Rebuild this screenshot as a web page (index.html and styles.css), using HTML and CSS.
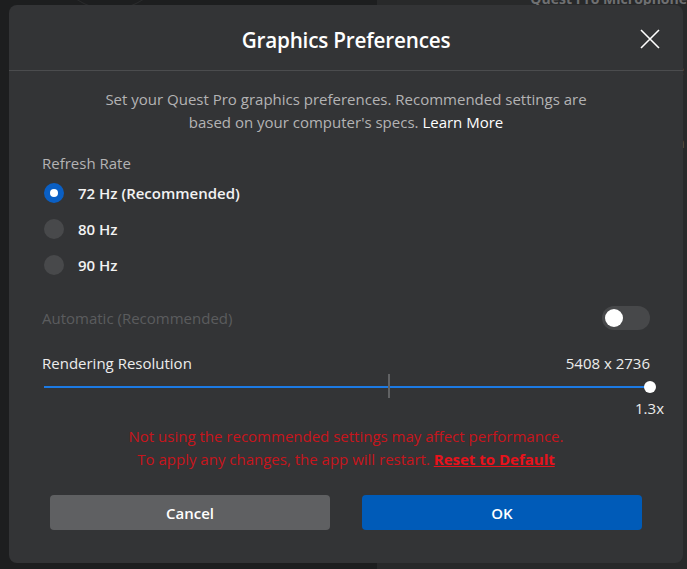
FILE: index.html
```html
<!DOCTYPE html>
<html>
<head>
<meta charset="utf-8">
<link rel="stylesheet" href="styles.css">
</head>
<body>
<div class="page">
  <div class="left-area"><div class="avatar"></div></div>
  <div class="right-area">
    <div class="bg-title">Quest Pro Microphone</div>
    <div class="bg-line">e</div>
    <div class="bg-line">n</div>
    <div class="bg-line">c</div>
  </div>
</div>

<div class="modal">
  <div class="modal-header">
    <h1 class="modal-title">Graphics Preferences</h1>
    <button class="close-btn" aria-label="Close">
      <svg width="20" height="20" viewBox="0 0 20 20"><path d="M1 1 L19 19 M19 1 L1 19" stroke="#fff" stroke-width="1.6" fill="none"/></svg>
    </button>
  </div>
  <div class="modal-body">
    <p class="desc">Set your Quest Pro graphics preferences. Recommended settings are<br>based on your computer's specs. <span class="learn">Learn More</span></p>

    <div class="section-label">Refresh Rate</div>
    <div class="radio-group">
      <div class="radio-row"><span class="radio checked"></span><span class="radio-label">72 Hz (Recommended)</span></div>
      <div class="radio-row"><span class="radio"></span><span class="radio-label">80 Hz</span></div>
      <div class="radio-row"><span class="radio"></span><span class="radio-label">90 Hz</span></div>
    </div>

    <div class="auto-row">
      <span class="auto-label">Automatic (Recommended)</span>
      <span class="toggle"><span class="knob"></span></span>
    </div>

    <div class="res-row">
      <span class="res-label">Rendering Resolution</span>
      <span class="res-value">5408 x 2736</span>
    </div>
    <div class="slider">
      <div class="track"></div>
      <div class="tick"></div>
      <div class="thumb"></div>
    </div>
    <div class="scale-row"><span class="scale">1.3x</span></div>

    <p class="warning">Not using the recommended settings may affect performance.<br>To apply any changes, the app will restart. <a class="reset">Reset to Default</a></p>

    <div class="buttons">
      <button class="btn cancel">Cancel</button>
      <button class="btn ok">OK</button>
    </div>
  </div>
</div>
</body>
</html>
```

FILE: styles.css
```css
* { box-sizing: border-box; }
html, body { margin: 0; padding: 0; }
body {
  width: 687px;
  height: 569px;
  overflow: hidden;
  background: #1d1e1f;
  font-family: "Open Sans", "Noto Sans", sans-serif;
  position: relative;
}
.page {
  display: flex;
  height: 569px;
}
.left-area {
  width: 385px;
  background: #1d1e1f;
  position: relative;
}
.avatar {
  position: absolute;
  left: 60px;
  top: -70px;
  width: 100px;
  height: 80px;
  border-radius: 50%;
  border: 1px solid #2a2b2c;
}
.right-area {
  flex: 1;
  background: #28292a;
  padding-left: 153px;
  display: flex;
  flex-direction: column;
  gap: 54px;
}
.bg-title {
  color: #6f7072;
  font-weight: 700;
  font-size: 14px;
  line-height: 14px;
  margin-top: -8px;
  white-space: nowrap;
}
.bg-line { color: #555; font-size: 14px; padding-left: 146px; }

.modal {
  position: absolute;
  left: 9px;
  top: 5px;
  width: 674px;
  height: 558px;
  background: #333436;
  border-radius: 8px;
  display: flex;
  flex-direction: column;
  color: #fff;
}
.modal-header {
  height: 66px;
  border-bottom: 1px solid #4b4c4e;
  display: flex;
  align-items: center;
  justify-content: center;
  position: relative;
}
.modal-title {
  margin: 0;
  font-size: 20.7px;
  font-weight: 600;
  letter-spacing: -0.2px;
  padding-top: 4px;
}
.close-btn {
  position: absolute;
  right: 23px;
  top: 24px;
  background: none;
  border: 0;
  padding: 0;
  width: 20px;
  height: 20px;
  cursor: pointer;
}
.close-btn svg { display: block; }

.modal-body {
  padding: 17px 33px 0 33px;
  display: flex;
  flex-direction: column;
}
.desc {
  margin: 0;
  text-align: center;
  color: #b3b3b4;
  font-size: 15px;
  line-height: 23px;
}
.learn { color: #fff; font-weight: 500; }

.section-label {
  margin-top: 19px;
  font-size: 15px;
  color: #b3b3b4;
  line-height: 20px;
}
.radio-group {
  display: flex;
  flex-direction: column;
  gap: 16px;
  margin-top: 10px;
}
.radio-row {
  display: flex;
  align-items: center;
  gap: 14px;
  height: 20px;
  padding-left: 2px;
}
.radio {
  width: 20px;
  height: 20px;
  border-radius: 50%;
  background: #48494b;
  display: flex;
  align-items: center;
  justify-content: center;
}
.radio.checked { background: #0a5fc4; }
.radio.checked::after {
  content: "";
  width: 8px;
  height: 8px;
  border-radius: 50%;
  background: #fff;
}
.radio-label {
  font-weight: 600;
  font-size: 15px;
  color: #f2f2f2;
}
.auto-row {
  margin-top: 31px;
  display: flex;
  justify-content: space-between;
  align-items: center;
  height: 24px;
}
.auto-label { color: #5b5c5e; font-size: 15px; }
.toggle {
  width: 48px;
  height: 24px;
  border-radius: 12px;
  background: #47484a;
  display: flex;
  align-items: center;
  padding-left: 3px;
}
.knob {
  width: 18px;
  height: 18px;
  border-radius: 50%;
  background: #fff;
}
.res-row {
  margin-top: 23px;
  display: flex;
  justify-content: space-between;
  align-items: center;
  height: 20px;
  font-size: 15px;
  color: #ececec;
}
.slider {
  position: relative;
  height: 24px;
  margin-top: 1px;
  margin-left: 2px;
}
.track {
  position: absolute;
  left: 0;
  right: 0;
  top: 12px;
  height: 2px;
  background: #1c7ae4;
}
.tick {
  position: absolute;
  left: 344px;
  top: 0;
  width: 2px;
  height: 24px;
  background: #616264;
}
.thumb {
  position: absolute;
  right: -6px;
  top: 7px;
  width: 12px;
  height: 12px;
  border-radius: 50%;
  background: #fff;
}
.scale-row {
  display: flex;
  justify-content: flex-end;
  margin-right: -14px;
  margin-top: 1px;
  font-size: 15px;
  color: #ececec;
  line-height: 18px;
}
.warning {
  margin: 8px 0 0 0;
  text-align: center;
  color: #c8141c;
  font-size: 15px;
  line-height: 23px;
}
.reset {
  color: #e8121b;
  font-weight: 700;
  text-decoration: underline;
}
.buttons {
  margin-top: 24px;
  display: flex;
  gap: 32px;
  padding: 0 8px;
}
.btn {
  flex: 1;
  height: 35px;
  border: 0;
  border-radius: 4px;
  color: #fff;
  font-family: inherit;
  font-weight: 600;
  font-size: 15px;
}
.cancel { background: #5f6062; }
.ok { background: #005bb8; }
```
